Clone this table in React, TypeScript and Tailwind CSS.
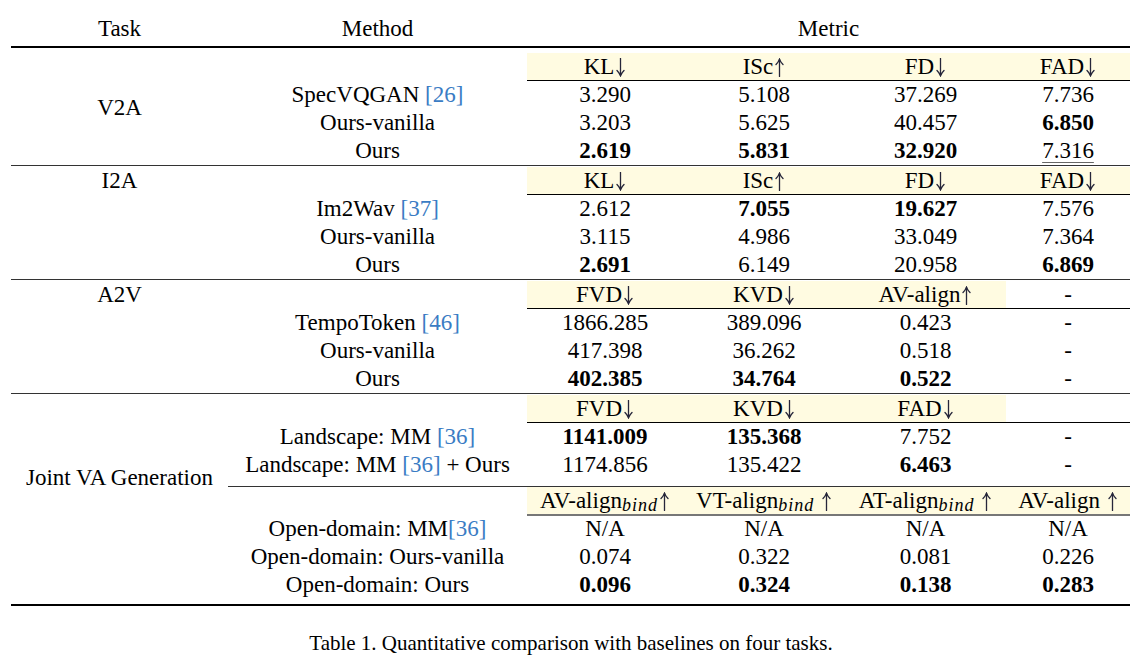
import React from "react"

type Cell = { v: string; b?: boolean; u?: boolean }

const COLS = ["w-[156px]", "w-[162px]", "w-[161px]", "w-[124px]"]

const Cite = ({ n }: { n: number }) => <span className="text-[#3a7cc4]">[{n}]</span>

// thin LaTeX-style arrow
function Arrow({ up }: { up?: boolean }) {
  return (
    <svg width="11" height="19" viewBox="0 0 11 19" className="inline-block align-[-3px] ml-[1px]">
      {up ? (
        <g stroke="#26263a" strokeWidth="1.3" fill="none" strokeLinecap="round">
          <path d="M5.5 18.5V1.5" />
          <path d="M2 6.5Q4.5 4 5.5 1.2Q6.5 4 9 6.5" />
        </g>
      ) : (
        <g stroke="#26263a" strokeWidth="1.3" fill="none" strokeLinecap="round">
          <path d="M5.5 0.5V17.5" />
          <path d="M2 12.5Q4.5 15 5.5 17.8Q6.5 15 9 12.5" />
        </g>
      )}
    </svg>
  )
}

function Head({ label, up, sub, gap }: { label: string; up?: boolean; sub?: boolean; gap?: boolean }) {
  return (
    <span className="whitespace-nowrap">
      {label}
      {sub && <sub className="italic text-[18px] tracking-[1px] relative top-[3px]">bind</sub>}
      {gap && " "}
      <Arrow up={up} />
    </span>
  )
}

function HeaderRow({ heads, last = 4, lineClass = "border-black" }: { heads: React.ReactNode[]; last?: number; lineClass?: string }) {
  return (
    <div className="flex">
      <div className="w-[299px]" />
      <div className={`flex border-b ${lineClass}`}>
        {heads.map((h, i) => (
          <div
            key={i}
            className={`${COLS[i]} h-[27px] leading-[27px] text-center ${i < last ? "bg-[#fffbe1]" : ""}`}
          >
            {h}
          </div>
        ))}
      </div>
    </div>
  )
}

function DataRow({ method, cells }: { method: React.ReactNode; cells: Cell[] }) {
  return (
    <div className="flex h-[28px] leading-[28px]">
      <div className="w-[299px] text-center whitespace-nowrap">{method}</div>
      {cells.map((c, i) => (
        <div key={i} className={`${COLS[i]} text-center`}>
          <span className={`${c.b ? "font-bold" : ""} ${c.u ? "underline decoration-[#666] decoration-1 underline-offset-[4px]" : ""}`}>
            {c.v}
          </span>
        </div>
      ))}
    </div>
  )
}

const c = (v: string, b = false, u = false): Cell => ({ v, b, u })

export default function App() {
  const audioHeads = [
    <Head label="KL" />,
    <Head label="ISc" up />,
    <Head label="FD" />,
    <Head label="FAD" />,
  ]

  return (
    <div className="w-[1142px] h-[656px] bg-white text-black text-[23px] font-['Liberation_Serif',serif] overflow-hidden">
      <div className="ml-[11px] w-[1119px]">
        {/* column titles */}
        <div className="flex pt-[15px] pb-[3px] h-[46px] leading-[28px]">
          <div className="w-[217px] text-center">Task</div>
          <div className="w-[299px] text-center">Method</div>
          <div className="w-[603px] text-center">Metric</div>
        </div>

        {/* V2A */}
        <div className="flex border-t-2 border-black">
          <div className="w-[217px] pt-[46px] text-center leading-[28px]">V2A</div>
          <div className="pt-[5px]">
            <HeaderRow heads={audioHeads} />
            <DataRow method={<>SpecVQGAN <Cite n={26} /></>} cells={[c("3.290"), c("5.108"), c("37.269"), c("7.736")]} />
            <DataRow method="Ours-vanilla" cells={[c("3.203"), c("5.625"), c("40.457"), c("6.850", true)]} />
            <DataRow method="Ours" cells={[c("2.619", true), c("5.831", true), c("32.920", true), c("7.316", false, true)]} />
          </div>
        </div>

        {/* I2A */}
        <div className="flex border-t border-[#333]">
          <div className="w-[217px] pt-[1px] text-center leading-[28px]">I2A</div>
          <div className="pt-[1px]">
            <HeaderRow heads={audioHeads} />
            <DataRow method={<>Im2Wav <Cite n={37} /></>} cells={[c("2.612"), c("7.055", true), c("19.627", true), c("7.576")]} />
            <DataRow method="Ours-vanilla" cells={[c("3.115"), c("4.986"), c("33.049"), c("7.364")]} />
            <DataRow method="Ours" cells={[c("2.691", true), c("6.149"), c("20.958"), c("6.869", true)]} />
          </div>
        </div>

        {/* A2V */}
        <div className="flex border-t border-[#333]">
          <div className="w-[217px] pt-[1px] text-center leading-[28px]">A2V</div>
          <div className="pt-[1px]">
            <HeaderRow
              last={3}
              heads={[<Head label="FVD" />, <Head label="KVD" />, <Head label="AV-align" up />, <span>-</span>]}
            />
            <DataRow method={<>TempoToken <Cite n={46} /></>} cells={[c("1866.285"), c("389.096"), c("0.423"), c("-")]} />
            <DataRow method="Ours-vanilla" cells={[c("417.398"), c("36.262"), c("0.518"), c("-")]} />
            <DataRow method="Ours" cells={[c("402.385", true), c("34.764", true), c("0.522", true), c("-")]} />
          </div>
        </div>

        {/* Joint VA Generation */}
        <div className="flex border-t border-[#333] border-b-2 border-b-black">
          <div className="w-[217px] pt-[70px] text-center leading-[28px] whitespace-nowrap">Joint VA Generation</div>
          <div className="pt-[1px] pb-[5px]">
            <div className="border-b border-[#333] pb-[7px]">
              <HeaderRow last={3} heads={[<Head label="FVD" />, <Head label="KVD" />, <Head label="FAD" />, <span />]} />
              <DataRow method={<>Landscape: MM <Cite n={36} /></>} cells={[c("1141.009", true), c("135.368", true), c("7.752"), c("-")]} />
              <DataRow method={<>Landscape: MM <Cite n={36} /> + Ours</>} cells={[c("1174.856"), c("135.422"), c("6.463", true), c("-")]} />
            </div>
            <div>
              <HeaderRow
                lineClass="border-[#777] border-b-2"
                heads={[
                  <Head label="AV-align" sub up />,
                  <Head label="VT-align" sub up gap />,
                  <Head label="AT-align" sub up gap />,
                  <Head label="AV-align" up gap />,
                ]}
              />
              <div className="-mt-[1px]">
                <DataRow method={<>Open-domain: MM<Cite n={36} /></>} cells={[c("N/A"), c("N/A"), c("N/A"), c("N/A")]} />
                <DataRow method="Open-domain: Ours-vanilla" cells={[c("0.074"), c("0.322"), c("0.081"), c("0.226")]} />
                <DataRow method="Open-domain: Ours" cells={[c("0.096", true), c("0.324", true), c("0.138", true), c("0.283", true)]} />
              </div>
            </div>
          </div>
        </div>
      </div>

      <p className="mt-[25px] text-center text-[21px] leading-[24px]">
        Table 1. Quantitative comparison with baselines on four tasks.
      </p>
    </div>
  )
}
